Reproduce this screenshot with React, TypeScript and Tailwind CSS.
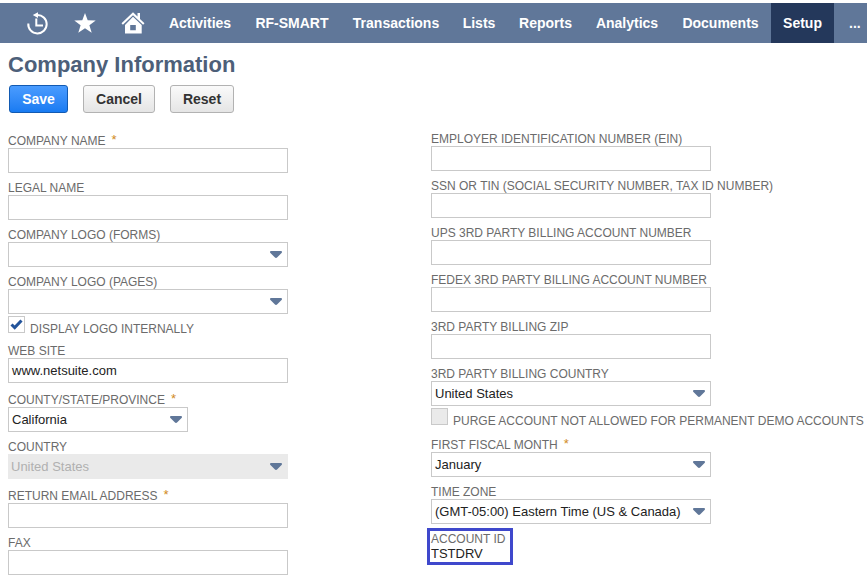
import type { ReactNode } from 'react';

const navItems = [
  { label: 'Activities', width: 'w-[86px]' },
  { label: 'RF-SMART', width: 'w-[98px]' },
  { label: 'Transactions', width: 'w-[110px]' },
  { label: 'Lists', width: 'w-[56px]' },
  { label: 'Reports', width: 'w-[77px]' },
  { label: 'Analytics', width: 'w-[86px]' },
  { label: 'Documents', width: 'w-[101px]' },
  { label: 'Setup', width: 'w-[63px]', active: true },
];

function HistoryIcon() {
  return (
    <svg width="22" height="24" viewBox="0 0 22 24" fill="none" stroke="white" strokeWidth="2">
      <path d="M2.300 12.500A9.200 9.200 0 1 0 11 4" />
      <path d="M12 1.200 6.800 4l5.200 3z" fill="white" stroke="none" />
      <path d="M10.300 7.500v7H17" />
    </svg>
  );
}

function StarIcon() {
  return (
    <svg width="22" height="20" viewBox="0 0 22 20" fill="white">
      <path d="m11 0 2.700 7.200 8 .2-6.300 4.800 2.300 7.500-6.700-4.400-6.700 4.400 2.300-7.500L.3 7.400l8-.2z" />
    </svg>
  );
}

function HomeIcon() {
  return (
    <svg width="24" height="22" viewBox="0 0 24 22" fill="white">
      <path d="M12 .3 16.500 4.600V1H19v6l4.500 4.200-1.400 1.500L12 3.300 1.900 12.700.5 11.200z" />
      <path fillRule="evenodd" d="m12 4.700 8.700 8.300v8.500H4V13zM9.200 13v5.200h5.600V13z" />
    </svg>
  );
}

function Arrow() {
  return (
    <svg width="12" height="7" viewBox="0 0 12 7" className="shrink-0" fill="#607799">
      <path d="M1 0h10q1 0 1 1 0 .7-.7 1.300L7.300 6.300Q6 7.500 4.700 6.300L.7 2.300Q0 1.700 0 1 0 0 1 0z" />
    </svg>
  );
}

type FieldProps = {
  label: string;
  value?: string;
  required?: boolean;
  select?: boolean;
  disabled?: boolean;
  narrow?: boolean;
  gap?: string;
};

function Field({ label, value, required, select, disabled, narrow, gap = 'mt-2' }: FieldProps) {
  return (
    <div className={gap}>
      <div className="flex h-3.5 whitespace-nowrap text-xs leading-[14px] text-[#6b6b6b]">
        {label}
        {required && <span className="ml-[6px] text-[13px] leading-[12px] text-[#d08a1d]">*</span>}
      </div>
      <div
        className={`flex h-[25px] items-center justify-between border pr-[5px] text-[13px] ${narrow ? 'w-[180px]' : 'w-[280px]'} ${
          disabled ? 'border-[#eaeaea] bg-[#eaeaea] pl-[2px] text-[#b0b0b0]' : 'border-[#c9c9c9] bg-white pl-[3px] text-[#222]'
        }`}
      >
        <span className="whitespace-nowrap">{value}</span>
        {select && <Arrow />}
      </div>
    </div>
  );
}

function Check({ label, checked }: { label: string; checked?: boolean }) {
  return (
    <div className="mt-0.5 flex h-[17px]">
      <span className={`flex size-[17px] shrink-0 items-center justify-center border border-[#c9c9c9] ${checked ? 'bg-white' : 'bg-[#eaeaea]'}`}>
        {checked && (
          <svg width="13" height="11" viewBox="0 0 13 11" fill="none" stroke="#23549b" strokeWidth="3">
            <path d="m1.500 5.500 3.200 3.100L11.500 1.500" />
          </svg>
        )}
      </span>
      <span className="ml-[5px] mt-[6px] whitespace-nowrap text-xs leading-[14px] text-[#6b6b6b]">{label}</span>
    </div>
  );
}

function Button({ children, primary, width }: { children: ReactNode; primary?: boolean; width: string }) {
  return (
    <button
      className={`h-7 rounded-[3px] border text-sm font-bold ${width} ${
        primary
          ? 'border-[#125ab2] bg-linear-to-b from-[#4a9cff] to-[#187bf2] text-white'
          : 'border-[#b2b2b2] bg-linear-to-b from-[#fafafa] to-[#e5e5e5] text-[#333]'
      }`}
    >
      {children}
    </button>
  );
}

export default function App() {
  return (
    <div className="h-[579px] w-[867px] overflow-hidden bg-white pt-[3px] font-['Liberation_Sans',Arial,sans-serif]">
      <nav className="flex h-10 items-center bg-[#607799] text-sm font-bold text-white">
        <div className="flex w-[157px] items-center pl-[26px]">
          <HistoryIcon />
          <div className="ml-[26px]"><StarIcon /></div>
          <div className="ml-[25px]"><HomeIcon /></div>
        </div>
        {navItems.map((item) => (
          <div key={item.label} className={`flex h-10 shrink-0 items-center justify-center ${item.width} ${item.active ? 'bg-[#24385b]' : ''}`}>
            {item.label}
          </div>
        ))}
        <div className="pl-[15px]">...</div>
      </nav>
      <h1 className="ml-2 mt-2 h-[26px] text-[22px] font-bold leading-[28px] text-[#4d5f79]">Company Information</h1>
      <div className="ml-[9px] mt-2 flex">
        <Button primary width="w-[59px]">Save</Button>
        <Button width="ml-[15px] w-[72px]">Cancel</Button>
        <Button width="ml-[15px] w-[64px]">Reset</Button>
      </div>
      <main className="flex pl-2 pt-[19px]">
        <section className="w-[423px] shrink-0 pt-0.5">
          <Field label="COMPANY NAME" required gap="mt-0" />
          <Field label="LEGAL NAME" />
          <Field label="COMPANY LOGO (FORMS)" select />
          <Field label="COMPANY LOGO (PAGES)" select />
          <Check label="DISPLAY LOGO INTERNALLY" checked />
          <Field label="WEB SITE" value="www.netsuite.com" gap="mt-[11px]" />
          <Field label="COUNTY/STATE/PROVINCE" value="California" required select narrow gap="mt-[10px]" />
          <Field label="COUNTRY" value="United States" select disabled />
          <Field label="RETURN EMAIL ADDRESS" required gap="mt-[10px]" />
          <Field label="FAX" />
        </section>
        <section>
          <Field label="EMPLOYER IDENTIFICATION NUMBER (EIN)" gap="mt-0" />
          <Field label="SSN OR TIN (SOCIAL SECURITY NUMBER, TAX ID NUMBER)" />
          <Field label="UPS 3RD PARTY BILLING ACCOUNT NUMBER" />
          <Field label="FEDEX 3RD PARTY BILLING ACCOUNT NUMBER" />
          <Field label="3RD PARTY BILLING ZIP" />
          <Field label="3RD PARTY BILLING COUNTRY" value="United States" select />
          <Check label="PURGE ACCOUNT NOT ALLOWED FOR PERMANENT DEMO ACCOUNTS" />
          <Field label="FIRST FISCAL MONTH" value="January" required select gap="mt-[13px]" />
          <Field label="TIME ZONE" value="(GMT-05:00) Eastern Time (US & Canada)" select />
          <div className="-ml-1 mt-1 h-[37px] w-[86px] whitespace-nowrap border-3 border-[#3f48cc] pl-px pt-px text-xs leading-[14px] text-[#6b6b6b]">
            <div>ACCOUNT ID</div>
            <div className="text-[13px] leading-4 text-[#222]">TSTDRV</div>
          </div>
        </section>
      </main>
    </div>
  );
}
